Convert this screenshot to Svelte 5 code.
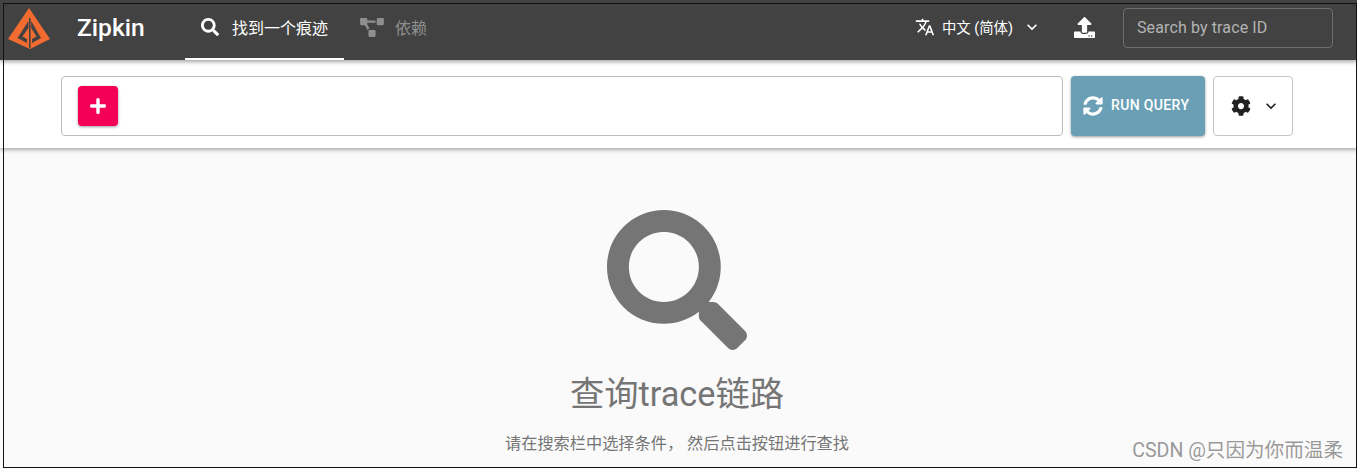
<script>
  let traceId = '';
</script>

<div class="page">
  <header class="bar">
    <svg class="logo" viewBox="0 0 44 44" aria-label="Zipkin logo">
      <path d="M21 0 42 31 22 41 0 31Z" fill="#f26b30" />
      <path d="M20.4 13 9.5 30 19 35V31L14.5 28.5 20.4 20ZM21 10V40H22.6V10Z" fill="#424242" />
      <path d="M23.2 13 33 30 24 35V31L28.5 28.5 23.2 20Z" fill="#424242" />
    </svg>
    <span class="brand">Zipkin</span>
    <nav class="tabs">
      <a class="tab active" href="#find">
        <svg class="tab-icon" viewBox="0 0 512 512"><path d="M505 442.7L405.3 343c-4.5-4.5-10.6-7-17-7H372c27.6-35.3 44-79.7 44-128C416 93.1 322.9 0 208 0S0 93.1 0 208s93.1 208 208 208c48.3 0 92.7-16.4 128-44v16.3c0 6.4 2.5 12.5 7 17l99.7 99.7c9.4 9.4 24.6 9.4 33.9 0l28.3-28.3c9.4-9.4 9.4-24.6.1-34zM208 336c-70.7 0-128-57.2-128-128 0-70.7 57.2-128 128-128 70.7 0 128 57.2 128 128 0 70.7-57.2 128-128 128z" /></svg>
        找到一个痕迹
      </a>
      <a class="tab" href="#deps">
        <svg class="dep-icon" viewBox="0 0 640 512"><path d="M384 320H256c-17.67 0-32 14.33-32 32v128c0 17.67 14.33 32 32 32h128c17.67 0 32-14.33 32-32V352c0-17.67-14.33-32-32-32zM192 32c0-17.67-14.33-32-32-32H32C14.33 0 0 14.33 0 32v128c0 17.67 14.33 32 32 32h95.72l73.16 128.04C211.98 300.98 232.4 288 256 288h.28L192 175.51V128h224V64H192V32zM608 0H480c-17.67 0-32 14.33-32 32v128c0 17.67 14.33 32 32 32h128c17.67 0 32-14.33 32-32V32c0-17.67-14.33-32-32-32z" /></svg>
        依赖
      </a>
    </nav>
    <div class="right">
      <button class="lang" type="button">
        <svg class="translate" viewBox="0 0 24 24"><path d="M12.87 15.07l-2.54-2.51.03-.03c1.74-1.94 2.98-4.17 3.71-6.53H17V4h-7V2H8v2H1v1.99h11.17C11.5 7.92 10.44 9.75 9 11.35 8.07 10.32 7.3 9.19 6.69 8h-2c.73 1.63 1.73 3.17 2.98 4.56l-5.09 5.02L4 19l5-5 3.11 3.11.76-2.04zM18.5 10h-2L12 22h2l1.12-3h4.75L21 22h2l-4.5-12zm-2.62 7l1.62-4.33L19.12 17h-3.24z" /></svg>
        <span>中文 (简体)</span>
        <svg class="chevron" viewBox="0 0 24 24"><path d="M16.59 8.59L12 13.17 7.41 8.59 6 10l6 6 6-6z" /></svg>
      </button>
      <svg class="upload" viewBox="0 0 512 512"><path d="M296 384h-80c-13.3 0-24-10.7-24-24V192h-87.7c-17.8 0-26.7-21.5-14.1-34.1L242.3 5.7c7.5-7.5 19.8-7.5 27.3 0l152.2 152.2c12.6 12.6 3.7 34.1-14.1 34.1H320v168c0 13.3-10.7 24-24 24zm216-8v112c0 13.3-10.7 24-24 24H24c-13.3 0-24-10.7-24-24V376c0-13.3 10.7-24 24-24h136v8c0 30.9 25.1 56 56 56h80c30.9 0 56-25.1 56-56v-8h136c13.3 0 24 10.7 24 24zm-124 88c0-11-9-20-20-20s-20 9-20 20 9 20 20 20 20-9 20-20zm64 0c0-11-9-20-20-20s-20 9-20 20 9 20 20 20 20-9 20-20z" /></svg>
      <input class="trace" bind:value={traceId} placeholder="Search by trace ID" />
    </div>
  </header>

  <section class="query">
    <div class="criteria">
      <button class="add" type="button" aria-label="Add">
        <svg viewBox="0 0 448 512"><path d="M416 208H272V64c0-17.67-14.33-32-32-32h-32c-17.67 0-32 14.33-32 32v144H32c-17.67 0-32 14.33-32 32v32c0 17.67 14.33 32 32 32h144v144c0 17.67 14.33 32 32 32h32c17.67 0 32-14.33 32-32V304h144c17.67 0 32-14.33 32-32v-32c0-17.67-14.33-32-32-32z" /></svg>
      </button>
    </div>
    <button class="run" type="button">
      <svg viewBox="0 0 512 512"><path d="M370.72 133.28C339.458 104.008 298.888 87.962 255.848 88c-77.458.068-144.328 53.178-162.791 126.85-1.344 5.363-6.122 9.15-11.651 9.15H24.103c-7.498 0-13.194-6.807-11.807-14.176C33.933 94.924 134.813 8 256 8c66.448 0 126.791 26.136 171.315 68.685L463.03 40.97C478.149 25.851 504 36.559 504 57.941V192c0 13.255-10.745 24-24 24H345.941c-21.382 0-32.09-25.851-16.971-40.971l41.75-41.749zM32 296h134.059c21.382 0 32.09 25.851 16.971 40.971l-41.75 41.75c31.262 29.273 71.835 45.319 114.876 45.28 77.418-.07 144.315-53.144 162.787-126.849 1.344-5.363 6.122-9.15 11.651-9.15h57.304c7.498 0 13.194 6.807 11.807 14.176C478.067 417.076 377.187 504 256 504c-66.448 0-126.791-26.136-171.315-68.685L48.97 471.03C33.851 486.149 8 475.441 8 454.059V320c0-13.255 10.745-24 24-24z" /></svg>
      <span>RUN QUERY</span>
    </button>
    <button class="settings" type="button" aria-label="Settings">
      <svg class="gear" viewBox="0 0 512 512"><path d="M487.4 315.7l-42.6-24.6c4.3-23.2 4.3-47 0-70.2l42.6-24.6c4.9-2.8 7.1-8.6 5.5-14-11.1-35.6-30-67.8-54.7-94.6-3.8-4.1-10-5.1-14.8-2.3L380.8 110c-17.9-15.4-38.5-27.3-60.8-35.1V25.8c0-5.6-3.9-10.5-9.4-11.7-36.7-8.2-74.3-7.8-109.2 0-5.5 1.2-9.4 6.1-9.4 11.7V75c-22.2 7.9-42.8 19.8-60.8 35.1L88.7 85.5c-4.9-2.8-11-1.9-14.8 2.3-24.7 26.7-43.6 58.9-54.7 94.6-1.7 5.4.6 11.2 5.5 14L67.3 221c-4.3 23.2-4.3 47 0 70.2l-42.6 24.6c-4.9 2.8-7.1 8.6-5.5 14 11.1 35.6 30 67.8 54.7 94.6 3.8 4.1 10 5.1 14.8 2.3l42.6-24.6c17.9 15.4 38.5 27.3 60.8 35.1v49.2c0 5.6 3.9 10.5 9.4 11.7 36.7 8.2 74.3 7.8 109.2 0 5.5-1.2 9.4-6.1 9.4-11.7v-49.2c22.2-7.9 42.8-19.8 60.8-35.1l42.6 24.6c4.9 2.8 11 1.9 14.8-2.3 24.7-26.7 43.6-58.9 54.7-94.6 1.5-5.5-.7-11.3-5.6-14.1zM256 336c-44.1 0-80-35.9-80-80s35.9-80 80-80 80 35.9 80 80-35.9 80-80 80z" /></svg>
      <svg class="small-chevron" viewBox="0 0 24 24"><path d="M16.59 8.59L12 13.17 7.41 8.59 6 10l6 6 6-6z" /></svg>
    </button>
  </section>

  <main class="empty">
    <svg class="big-search" viewBox="0 0 512 512"><path d="M505 442.7L405.3 343c-4.5-4.5-10.6-7-17-7H372c27.6-35.3 44-79.7 44-128C416 93.1 322.9 0 208 0S0 93.1 0 208s93.1 208 208 208c48.3 0 92.7-16.4 128-44v16.3c0 6.4 2.5 12.5 7 17l99.7 99.7c9.4 9.4 24.6 9.4 33.9 0l28.3-28.3c9.4-9.4 9.4-24.6.1-34zM208 336c-70.7 0-128-57.2-128-128 0-70.7 57.2-128 128-128 70.7 0 128 57.2 128 128 0 70.7-57.2 128-128 128z" /></svg>
    <h2>查询trace链路</h2>
    <p>请在搜索栏中选择条件， 然后点击按钮进行查找</p>
  </main>

  <span class="watermark">CSDN @只因为你而温柔</span>
  <div class="frame"></div>
</div>

<style>
  :global(body) {
    margin: 0;
    background: #fafafa;
  }

  .page {
    position: relative;
    height: 469px;
    overflow: hidden;
    font-family: Roboto, "Noto Sans CJK SC", sans-serif;
  }

  .frame {
    position: absolute;
    z-index: 3;
    left: 3px;
    top: 3px;
    right: 0;
    bottom: 1px;
    border: 1px solid #111;
    pointer-events: none;
  }

  .bar {
    position: relative;
    z-index: 2;
    display: flex;
    align-items: center;
    box-sizing: border-box;
    height: 60px;
    padding-bottom: 6px;
    background: #424242;
    color: #fff;
    box-shadow: 0 2px 4px rgba(0, 0, 0, 0.35);
  }

  .logo {
    width: 44px;
    height: 44px;
    margin-left: 8px;
    margin-top: 6px;
    flex: none;
  }

  .brand {
    margin-left: 25px;
    width: 108px;
    font-size: 24.6px;
    font-weight: 500;
  }

  .tabs {
    display: flex;
    align-self: stretch;
    margin-bottom: -6px;
  }

  .tab {
    display: flex;
    align-items: center;
    box-sizing: border-box;
    padding: 0 16px 4px;
    color: #8f8f8f;
    font-size: 16px;
    text-decoration: none;
    border-bottom: 2px solid transparent;
  }

  .tab.active {
    color: #fff;
    border-bottom-color: #fff;
  }

  .tab-icon {
    width: 18px;
    height: 18px;
    margin-right: 13px;
    fill: #fff;
  }

  .dep-icon {
    width: 24px;
    height: 19px;
    margin-right: 11px;
    fill: #8f8f8f;
  }

  .right {
    margin-left: auto;
    display: flex;
    align-items: center;
  }

  .lang {
    display: flex;
    align-items: center;
    padding: 0;
    border: 0;
    background: none;
    color: #fff;
    font: inherit;
    font-size: 14.4px;
  }

  .lang span {
    margin-top: -2px;
  }

  .translate {
    width: 20px;
    height: 20px;
    margin-right: 7px;
    fill: #fff;
  }

  .chevron {
    width: 20px;
    height: 20px;
    margin-left: 9px;
    fill: #fff;
  }

  .upload {
    width: 21px;
    height: 21px;
    margin-left: 32px;
    fill: #fff;
  }

  .trace {
    box-sizing: border-box;
    width: 210px;
    height: 40px;
    margin: 2px 24px 0 28px;
    padding: 0 13px 2px;
    background: none;
    border: 1px solid #6e6e6e;
    border-radius: 4px;
    color: #fff;
    font: inherit;
    font-size: 16px;
    letter-spacing: 0.12px;
  }

  .trace::placeholder {
    color: #b4b4b4;
    opacity: 1;
  }

  .query {
    position: relative;
    z-index: 1;
    display: flex;
    box-sizing: border-box;
    height: 88px;
    padding: 16px 64px 12px 61px;
    background: #fff;
    box-shadow: 0 2px 4px rgba(0, 0, 0, 0.32);
  }

  .criteria {
    flex: 1;
    display: flex;
    align-items: center;
    padding-left: 16px;
    border: 1px solid #bdbdbd;
    border-radius: 4px;
  }

  .add {
    display: flex;
    align-items: center;
    justify-content: center;
    width: 40px;
    height: 40px;
    padding: 0;
    border: 0;
    border-radius: 4px;
    background: #f50057;
    box-shadow: 0 1px 3px rgba(0, 0, 0, 0.4);
  }

  .add svg {
    width: 16px;
    height: 18px;
    fill: #fff;
  }

  .run {
    display: flex;
    align-items: center;
    box-sizing: border-box;
    width: 134px;
    margin-left: 8px;
    padding: 0 0 0 12px;
    border: 0;
    border-radius: 4px;
    background: #6a9fb5;
    color: #fff;
    font: inherit;
    font-size: 14px;
    font-weight: 500;
    letter-spacing: 0.35px;
    box-shadow: 0 1px 3px rgba(0, 0, 0, 0.4);
  }

  .run svg {
    width: 20px;
    height: 20px;
    margin-right: 8px;
    fill: #fff;
  }

  .run span {
    margin-top: -2px;
  }

  .settings {
    display: flex;
    align-items: center;
    justify-content: center;
    box-sizing: border-box;
    width: 80px;
    margin-left: 8px;
    padding: 0 0 0 6px;
    border: 1px solid #c4c4c4;
    border-radius: 4px;
    background: #fff;
  }

  .gear {
    width: 20px;
    height: 20px;
    fill: #212121;
  }

  .small-chevron {
    width: 20px;
    height: 20px;
    margin-left: 10px;
    fill: #212121;
  }

  .empty {
    display: flex;
    flex-direction: column;
    align-items: center;
    padding: 62px 3px 0 0;
    color: #757575;
  }

  .big-search {
    width: 140px;
    height: 140px;
    fill: #757575;
  }

  h2 {
    margin: 20px 0 0;
    font-size: 34.3px;
    font-weight: 400;
    line-height: 48px;
  }

  p {
    margin: 14px 0 0;
    font-size: 16.2px;
    line-height: 24px;
  }

  .watermark {
    position: absolute;
    right: 14px;
    bottom: 6px;
    color: rgba(120, 120, 120, 0.75);
    font-size: 19.6px;
    line-height: 24px;
  }
</style>
